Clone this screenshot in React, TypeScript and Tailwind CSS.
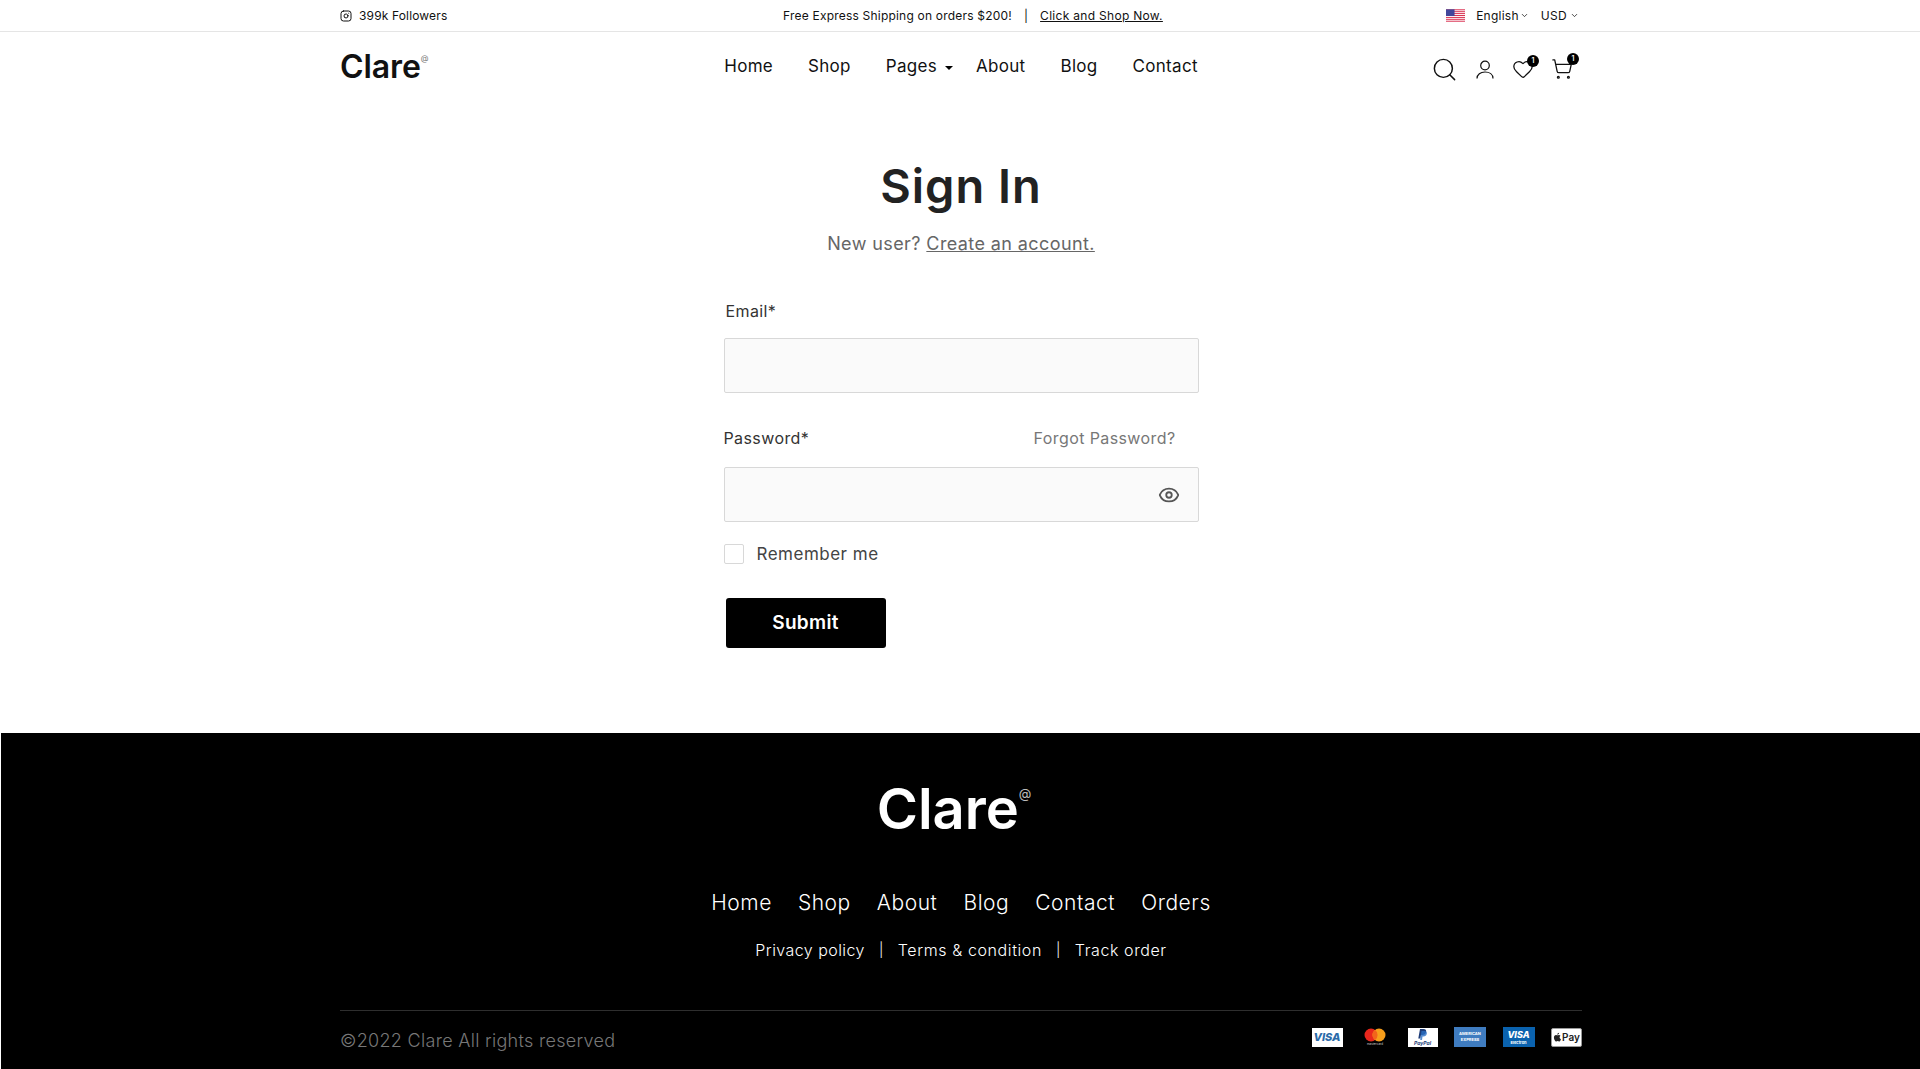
import { Instagram, ChevronDown, Search, Heart, ShoppingCart, Eye } from 'lucide-react';

const font = "font-['Inter','Liberation_Sans',sans-serif]";

function UsFlag() {
  const stripes = [0, 2, 4, 6, 8, 10, 12];
  return (
    <svg width="19" height="13" viewBox="0 0 20 13">
      <rect width="20" height="13" fill="#fff" />
      {stripes.map((i) => (
        <rect key={i} y={i} width="20" height="1" fill="#d8294a" />
      ))}
      <rect width="9" height="7" fill="#41479b" />
    </svg>
  );
}

function UserIcon() {
  return (
    <svg width="18" height="19" viewBox="0 0 18 19" fill="none" stroke="currentColor" strokeWidth="1.2">
      <circle cx="9" cy="5.500" r="4.300" />
      <path d="M1 18.500c0-4.200 3.500-6.500 8-6.500s8 2.300 8 6.500" />
    </svg>
  );
}

function Badge({ className }: { className: string }) {
  return (
    <span className={`absolute w-[12px] h-[12px] rounded-full bg-black text-white text-[7px] leading-[12px] text-center font-semibold ${className}`}>
      1
    </span>
  );
}

function PaymentIcons() {
  return (
    <div className="flex items-center gap-[16.5px]">
      <div className="w-[31px] h-[19px] bg-white flex items-center justify-center text-[11px] font-extrabold italic text-[#2a6aa8]">VISA</div>
      <div className="w-[32px] h-[22px] flex flex-col items-center justify-center">
        <svg width="22" height="14" viewBox="0 0 22 14">
          <circle cx="7" cy="7" r="6.5" fill="#e8261c" />
          <circle cx="15" cy="7" r="6.5" fill="#f79e1b" />
          <path d="M11 1.8a6.5 6.5 0 0 1 0 10.4a6.5 6.5 0 0 1 0-10.4z" fill="#f2641c" />
        </svg>
        <span className="text-[3px] leading-[4px] text-[#ccc]">mastercard</span>
      </div>
      <div className="w-[30px] h-[19px] bg-white flex flex-col items-center justify-center">
        <svg width="9" height="11" viewBox="0 0 9 11">
          <path d="M2 0h3.5c2 0 3 1.2 2.6 3c-.4 1.900-1.800 3-3.800 3H3L2.300 9.500H.3z" fill="#1d3c78" />
          <path d="M3.500 2h3c1.800 0 2.700 1.100 2.300 2.800c-.4 1.800-1.600 2.700-3.300 2.700H4.500L4 11H2.200z" fill="#2a6fc4" opacity="0.8" />
        </svg>
        <span className="text-[5px] font-bold italic text-[#1d3c78] leading-[6px]">PayPal</span>
      </div>
      <div className="w-[32px] h-[20px] bg-[#3f7cc0] flex flex-col items-center justify-center text-[4px] leading-[6px] font-bold text-white">
        <span>AMERICAN</span>
        <span>EXPRESS</span>
      </div>
      <div className="w-[32px] h-[20px] bg-[#0a62ae] flex flex-col items-center justify-center text-white">
        <span className="text-[9px] leading-[10px] font-extrabold italic">VISA</span>
        <span className="text-[4px] leading-[5px] font-bold">Electron</span>
      </div>
      <div className="w-[31px] h-[19px] bg-white rounded-[2px] border border-[#999] flex items-center justify-center gap-[1px] text-[10px] font-semibold text-[#222]">
        <svg width="8" height="10" viewBox="0 0 8 10">
          <path d="M6.600 5.300c0-1 .8-1.500.9-1.600c-.5-.7-1.200-.8-1.500-.8c-.6-.1-1.200.4-1.600.4c-.3 0-.8-.4-1.300-.4C2.400 2.900 1.700 3.300 1.300 4c-.8 1.300-.2 3.300.6 4.400c.4.500.8 1.100 1.400 1.100c.5 0 .8-.4 1.400-.4s.9.400 1.400.4c.6 0 1-.6 1.300-1.100c.4-.6.600-1.200.6-1.200s-1.400-.5-1.400-1.900zM5.600 2.100c.3-.4.500-.9.500-1.400c-.4 0-1 .3-1.300.6c-.3.3-.5.9-.5 1.400c.5 0 1-.2 1.300-.6z" fill="#222" />
        </svg>
        Pay
      </div>
    </div>
  );
}

export default function App() {
  return (
    <div className={`${font} bg-white min-h-screen text-[#111]`}>
      <div className="pl-[2px]">
        <div className="h-[32px] -ml-[2px] pl-[2px] border-b border-[#e5e5e5]">
          <div className="w-[1242px] mx-auto h-full flex items-center justify-between text-[12px] font-normal">
            <div className="flex items-center gap-[7px] w-[324px] tracking-[0.15px]">
              <Instagram className="w-[12px] h-[12px]" />
              <span>399k Followers</span>
            </div>
            <div className="flex items-center tracking-[0.2px]">
              <span>Free Express Shipping on orders $200!</span>
              <span className="mx-[12px]">|</span>
              <span className="underline tracking-[0.3px]">Click and Shop Now.</span>
            </div>
            <div className="flex items-center justify-end w-[300px] gap-[10px]">
              <UsFlag />
              <span className="flex items-center gap-[1px] tracking-[0.25px] ml-[1px]">
                English
                <ChevronDown className="w-[9px] h-[9px]" />
              </span>
              <span className="flex items-center gap-[3px] ml-[2px] mr-[3px] tracking-[0.3px]">
                USD
                <ChevronDown className="w-[9px] h-[9px]" />
              </span>
            </div>
          </div>
        </div>

        <header className="w-[1242px] mx-auto h-[68px] flex items-center justify-between">
          <div className="w-[300px] text-[32px] font-semibold leading-none flex items-start pt-[2px] tracking-[-0.1px]">
            Clare
            <span className="text-[8px] font-normal text-[#777] mt-[3px]">@</span>
          </div>
          <nav className="flex items-center gap-[35px] text-[17px] font-normal tracking-[0.3px] pt-[2px]">
            <a>Home</a>
            <a>Shop</a>
            <a className="flex items-center gap-[8px] -mr-[12px]">
              Pages
              <span className="w-0 h-0 border-x-[4px] border-x-transparent border-t-[4px] border-t-black mt-[2px]" />
            </a>
            <a>About</a>
            <a>Blog</a>
            <a>Contact</a>
          </nav>
          <div className="w-[300px] flex items-center justify-end pt-[6px] pr-[9px]">
            <Search className="w-[27px] h-[27px]" strokeWidth={1.3} />
            <span className="mx-[18px]">
              <UserIcon />
            </span>
            <span className="relative mr-[17px]">
              <Heart className="w-[22px] h-[22px]" strokeWidth={1.4} />
              <Badge className="-top-[3px] -right-[5px]" />
            </span>
            <span className="relative">
              <ShoppingCart className="w-[22px] h-[22px]" strokeWidth={1.4} />
              <Badge className="-top-[5px] -right-[6px]" />
            </span>
          </div>
        </header>

        <main className="h-[633px] pt-[56px]">
          <div className="w-[475px] mx-auto">
            <h1 className="text-center text-[47px] leading-[60px] font-semibold tracking-[1px] text-[#222]">Sign In</h1>
            <p className="text-center text-[18px] leading-[28px] tracking-[0.4px] text-[#666] mt-[14px]">
              New user? <span className="underline">Create an account.</span>
            </p>
            <label className="block text-[16px] leading-[24px] tracking-[0.4px] text-[#333] ml-[2px] mt-[41px]">Email*</label>
            <input className="block w-full h-[55px] mt-[15px] bg-[#fafafa] border border-[#d8d8d8] rounded-[2px]" />
            <div className="flex justify-between text-[16px] leading-[24px] tracking-[0.4px] mt-[33px] pr-[23px]">
              <span className="text-[#333]">Password*</span>
              <span className="text-[#777]">Forgot Password?</span>
            </div>
            <div className="relative mt-[17px]">
              <input className="block w-full h-[55px] bg-[#fafafa] border border-[#d8d8d8] rounded-[2px]" />
              <Eye className="absolute right-[19px] top-[17px] w-[22px] h-[22px] text-[#555]" strokeWidth={2} />
            </div>
            <div className="flex items-center gap-[13px] mt-[21px]">
              <span className="w-[20px] h-[20px] border border-[#d8d8d8] rounded-[2px]" />
              <span className="text-[17px] leading-[20px] tracking-[0.5px] text-[#444] pt-[1px]">Remember me</span>
            </div>
            <button className="block ml-[2px] mt-[34px] pt-[1px] w-[160px] h-[50px] bg-black text-white text-[19px] tracking-[0.3px] font-semibold rounded-[3px]">
              Submit
            </button>
          </div>
        </main>
      </div>

      <footer className="ml-px pl-px h-[336px] bg-black text-white">
        <div className="flex justify-center pt-[44px]">
          <div className="flex items-start text-[56px] leading-[64px] font-semibold -ml-[14px]">
            Clare
            <span className="text-[13px] leading-[16px] font-normal text-[#bbb] mt-[8px]">@</span>
          </div>
        </div>
        <div className="flex justify-center gap-[26px] text-[21px] leading-[28px] font-light tracking-[0.55px] mt-[48px]">
          <a>Home</a>
          <a>Shop</a>
          <a>About</a>
          <a>Blog</a>
          <a>Contact</a>
          <a>Orders</a>
        </div>
        <div className="flex justify-center items-center text-[16px] leading-[24px] tracking-[0.45px] font-light mt-[21px]">
          <a>Privacy policy</a>
          <span className="mx-[14px] text-[14px]">|</span>
          <a className="tracking-[0.6px]">Terms &amp; condition</a>
          <span className="mx-[14px] text-[14px]">|</span>
          <a className="tracking-[0.6px]">Track order</a>
        </div>
        <div className="w-[1242px] mx-auto mt-[48px] border-t border-[#2e2e2e] flex justify-between pt-[16px]">
          <span className="text-[18px] leading-[28px] font-light tracking-[0.3px] text-[#777]">©2022 Clare All rights reserved</span>
          <div className="-mt-[1px] -ml-px">
            <PaymentIcons />
          </div>
        </div>
      </footer>
    </div>
  );
}
